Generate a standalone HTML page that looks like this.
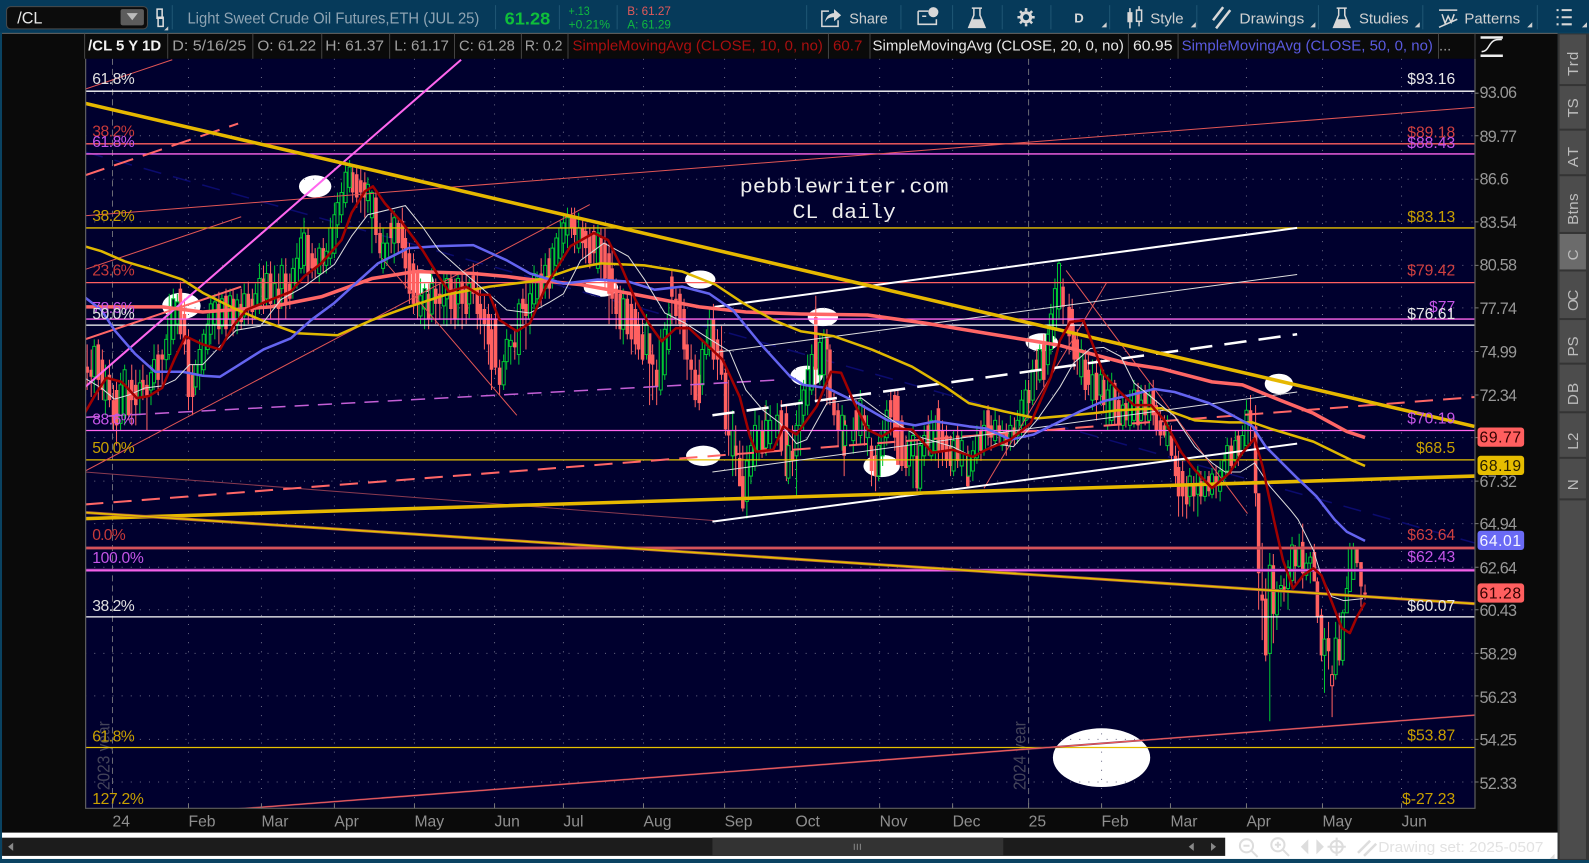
<!DOCTYPE html>
<html><head><meta charset="utf-8"><title>/CL daily</title>
<style>
html,body{margin:0;padding:0;background:#0a0a0a;overflow:hidden}
svg{display:block}
text{font-family:"Liberation Sans",sans-serif}
.m{font-size:15.500px;fill:#8f8f8f}
.p{font-size:16px;fill:#979797}
.f{font-size:15.500px}
.d{font-size:15.500px;text-anchor:end}
.i{font-size:14.500px;fill:#a0a0a0}
.t{font-size:15px;fill:#d0d0d0}
.r{font-size:15px;fill:#bdbdbd}
</style></head><body>
<svg xmlns="http://www.w3.org/2000/svg" width="1589" height="863" viewBox="0 0 1568 852" preserveAspectRatio="none">
<clipPath id="cc"><rect x="84" y="58" width="1371" height="740"/></clipPath>
<rect width="1568" height="852" fill="#0a4362"/>
<rect x="0" y="0" width="1568" height="32" fill="#063a5a"/>
<rect x="2" y="33" width="1535" height="790" fill="#0a0a0a"/>
<rect x="84" y="58" width="1371" height="740" fill="#00002e"/>
<!-- toolbar left -->
<rect x="6.500" y="6.500" width="139" height="22" rx="4" fill="#0c0c0c" stroke="#4a4a4a"/>
<text x="17" y="23" font-size="16" fill="#e8e8e8">/CL</text>
<rect x="119" y="9" width="23" height="16" rx="2" fill="#5c5c5c"/>
<path d="M125 13h11l-5.500 7z" fill="#bbb"/>
<path d="M155 9h5v9h-5zM156 17h5v9h-5z" fill="none" stroke="#ddd" stroke-width="1.500"/>
<path d="M166 30h-4l4-4z" fill="#ccc"/>
<path d="M170 5v24M489 5v24M552 5v24M609 5v24M796 5v24M889 5v24M940 5v24M989 5v24M1037 5v24M1095 5v24M1181 5v24M1301 5v24M1404 5v24M1517 5v24" stroke="#1f5674" stroke-width="1"/>
<text x="185" y="23" font-size="15.500" fill="#8fa4b3" textLength="288" lengthAdjust="spacingAndGlyphs">Light Sweet Crude Oil Futures,ETH (JUL 25)</text>
<text x="498" y="24" font-size="17.500" font-weight="700" fill="#0fbf3a" textLength="45" lengthAdjust="spacingAndGlyphs">61.28</text>
<text x="561" y="15" font-size="11.500" fill="#10b840" textLength="21" lengthAdjust="spacingAndGlyphs">+.13</text>
<text x="561" y="28" font-size="11.500" fill="#10b840" textLength="41" lengthAdjust="spacingAndGlyphs">+0.21%</text>
<text x="619" y="15" font-size="11.500" fill="#e25a5a" textLength="43" lengthAdjust="spacingAndGlyphs">B: 61.27</text>
<text x="619" y="28" font-size="11.500" fill="#10b840" textLength="43" lengthAdjust="spacingAndGlyphs">A: 61.29</text>
<!-- toolbar right icons -->
<g fill="none" stroke="#d8d8d8" stroke-width="1.500">
<path d="M818 11h-7v15h16v-6" /><path d="M814 22c1-6 5-9 9-9v-4l7 6-7 6v-4c-4 0-7 1-9 5z" fill="#d8d8d8" stroke="none"/>
<path d="M906 11h10M906 11v13h18v-5M910 16h4"/><circle cx="921" cy="12" r="5" fill="#d8d8d8" stroke="none"/>
<path d="M959 8h10M961 8v7l-5 12h16l-5-12V8"/><path d="M959 19h10l3 8h-16z" fill="#d8d8d8" stroke="none"/>
<circle cx="1012.500" cy="17" r="4.500" stroke-width="3"/><path d="M1012.500 8v3M1012.500 23v3M1004 17h3M1018 17h3M1006.500 11l2 2M1016.500 21l2 2M1018.500 11l-2 2M1008.500 21l-2 2" stroke-width="2.500"/>
<path d="M1115 8v20M1124 6v20" stroke-width="1.500"/><rect x="1112.500" y="12" width="5" height="10" fill="#d8d8d8" stroke="none"/><rect x="1121.500" y="10" width="5" height="11" fill="#063a5a"/>
<path d="M1197 20l10-13M1200 28l14-18" stroke-width="2.500"/>
<path d="M1319 8h10M1321 8v7l-5 12h16l-5-12V8"/><path d="M1319 19h10l3 8h-16z" fill="#d8d8d8" stroke="none"/>
<path d="M1420 10h18M1423 14l3 9 3-7 3 6 3-8M1420 27l18-8"/>
<path d="M1536 10h2M1536 17h2M1536 24h2M1541 10h10M1541 17h10M1541 24h10" stroke-width="2"/>
</g>
<g fill="#d0d0d0"><path d="M1092 22v5h-5zM1180 22v5h-5zM1298 22v5h-5zM1401 22v5h-5zM1512 22v5h-5zM1566 22v5h-5z"/></g>
<text x="838" y="23" class="t" textLength="38" lengthAdjust="spacingAndGlyphs">Share</text>
<text x="1060" y="22" font-size="13" font-weight="700" fill="#d8d8d8">D</text>
<text x="1135" y="23" class="t" textLength="33" lengthAdjust="spacingAndGlyphs">Style</text>
<text x="1223" y="23" class="t" textLength="64" lengthAdjust="spacingAndGlyphs">Drawings</text>
<text x="1341" y="23" class="t" textLength="49" lengthAdjust="spacingAndGlyphs">Studies</text>
<text x="1445" y="23" class="t" textLength="55" lengthAdjust="spacingAndGlyphs">Patterns</text>
<!-- info bar -->
<path d="M2 33h1535" stroke="#666" stroke-width="1"/>
<path d="M83.500 33v25M165.500 33v25M249.500 33v25M317.500 33v25M384.500 33v25M448.500 33v25M514.500 33v25M560.500 33v25M817.500 33v25M858.500 33v25M1113.500 33v25M1162.500 33v25M1419.500 33v25M1455.500 33v25" stroke="#444"/>
<text x="87" y="50" font-size="14.500" font-weight="700" fill="#f2f2f2" textLength="72" lengthAdjust="spacingAndGlyphs">/CL 5 Y 1D</text>
<text x="170" y="50" class="i" textLength="73" lengthAdjust="spacingAndGlyphs">D: 5/16/25</text>
<text x="254" y="50" class="i" textLength="58" lengthAdjust="spacingAndGlyphs">O: 61.22</text>
<text x="321" y="50" class="i" textLength="58" lengthAdjust="spacingAndGlyphs">H: 61.37</text>
<text x="389" y="50" class="i" textLength="54" lengthAdjust="spacingAndGlyphs">L: 61.17</text>
<text x="453" y="50" class="i" textLength="55" lengthAdjust="spacingAndGlyphs">C: 61.28</text>
<text x="518" y="50" class="i" textLength="37" lengthAdjust="spacingAndGlyphs">R: 0.2</text>
<text x="565" y="50" font-size="14.500" fill="#a80f0f" textLength="247" lengthAdjust="spacingAndGlyphs">SimpleMovingAvg (CLOSE, 10, 0, no)</text>
<text x="822" y="50" font-size="14.500" fill="#a80f0f" textLength="29" lengthAdjust="spacingAndGlyphs">60.7</text>
<text x="861" y="50" font-size="14.500" fill="#e8e8e8" textLength="248" lengthAdjust="spacingAndGlyphs">SimpleMovingAvg (CLOSE, 20, 0, no)</text>
<text x="1118" y="50" font-size="14.500" fill="#e8e8e8" textLength="39" lengthAdjust="spacingAndGlyphs">60.95</text>
<text x="1166" y="50" font-size="14.500" fill="#5a5ae0" textLength="248" lengthAdjust="spacingAndGlyphs">SimpleMovingAvg (CLOSE, 50, 0, no)</text>
<text x="1420" y="50" font-size="14.500" fill="#a0a0a0">...</text>
<path d="M1461 37h22M1461 55h22" stroke="#eee" stroke-width="2.500"/><path d="M1462 51c5 0 6-4 9-8 3-4 6-4 11-4" fill="none" stroke="#eee" stroke-width="1.500"/>
<!-- chart -->
<g clip-path="url(#cc)">
<g fill="#fff">
<ellipse cx="311" cy="184" rx="16" ry="11"/><ellipse cx="179" cy="302" rx="19" ry="13"/><ellipse cx="415" cy="278" rx="13" ry="12"/><ellipse cx="593" cy="284" rx="17" ry="9"/><ellipse cx="691" cy="276" rx="15" ry="9"/><ellipse cx="812" cy="313" rx="15" ry="9"/><ellipse cx="796" cy="371" rx="16" ry="10"/><ellipse cx="694" cy="450" rx="17" ry="10"/><ellipse cx="870" cy="460" rx="18" ry="11"/><ellipse cx="1028" cy="338" rx="16" ry="9"/><ellipse cx="1262" cy="379" rx="14" ry="10"/><ellipse cx="1087" cy="748" rx="48" ry="29"/>
</g>
<!-- grid -->
<g stroke="#6a6a85" stroke-width="1" stroke-dasharray="1 8">
<path d="M84 92h1371M84 134h1371M84 177h1371M84 219h1371M84 262h1371M84 304h1371M84 347h1371M84 390h1371M84 432h1371M84 475h1371M84 517h1371M84 560h1371M84 602h1371M84 645h1371M84 687h1371M84 730h1371M84 772h1371"/>
<path d="M186 58v740M258 58v740M330 58v740M409 58v740M488 58v740M556 58v740M635 58v740M715 58v740M785 58v740M868 58v740M940 58v740M1087 58v740M1155 58v740M1230 58v740M1305 58v740M1383 58v740"/>
</g>
<path d="M111 58v740M1015 58v740" stroke="#6a6a75" stroke-width="1" stroke-dasharray="6 4"/>
<text transform="translate(108 780) rotate(-90)" font-size="17" fill="#44445a" textLength="68" lengthAdjust="spacingAndGlyphs">2023 year</text>
<text transform="translate(1012 780) rotate(-90)" font-size="17" fill="#44445a" textLength="68" lengthAdjust="spacingAndGlyphs">2024 year</text>
<path d="M84 150L1455 536" stroke="#0b0b6e" stroke-width="1.500" stroke-dasharray="18 12"/>
<!-- green wicks -->
<path fill="none" stroke="#00c832" stroke-width="1" d="M93 335V388M104 360V410M119 368V425M123 360V420M138 365V410M149 360V400M152 340V385M164 330V365M167 290V355M171 285V340M175 290V330M193 355V390M197 335V385M201 325V370M205 310V350M208 292V340M212 290V335M219 290V330M227 285V320M234 290V330M241 280V322M252 280V315M256 260V310M263 258V305M271 262V305M278 255V305M289 255V295M293 240V285M297 225V270M300 215V270M315 240V280M322 240V270M326 215V262M330 200V255M333 190V235M337 180V220M341 160V205M345 158V190M363 175V210M367 188V250M378 225V270M382 230V262M389 208V260M415 275V320M419 280V325M426 265V318M438 270V320M441 270V322M452 270V322M463 275V315M497 350V385M500 325V365M504 330V360M512 295V360M523 280V330M527 262V305M530 268V305M538 250V295M545 240V285M549 230V270M553 218V262M556 210V250M560 205V245M571 210V250M590 222V270M615 285V340M638 310V355M652 325V390M656 318V375M660 298V350M693 335V390M697 325V355M700 305V352M723 405V470M737 440V512M741 425V478M745 405V465M749 410V455M756 395V450M760 400V445M767 398V440M778 430V478M786 405V490M790 380V450M793 375V425M797 350V410M801 340V390M809 330V380M813 325V385M831 400V445M834 410V450M842 412V448M849 385V438M856 410V450M867 430V475M871 415V460M875 395V440M897 425V470M901 420V482M908 430V485M912 420V460M919 405V455M923 410V455M941 425V470M949 425V470M956 445V478M960 435V475M964 420V458M971 405V450M982 405V440M989 415V445M997 410V445M1004 405V438M1008 385V430M1012 375V420M1019 355V400M1026 340V378M1034 320V370M1037 300V350M1041 275V335M1045 258V315M1067 335V380M1078 355V405M1086 360V400M1093 370V425M1097 368V420M1108 390V425M1115 385V425M1119 375V422M1126 380V425M1134 378V425M1152 410V445M1174 462V500M1182 460V510M1189 465V495M1196 462V492M1204 455V495M1208 448V478M1211 432V470M1219 425V462M1226 420V450M1230 395V445M1253 546V712M1260 574V622M1264 568V599M1271 553V602M1275 530V582M1282 527V560M1289 546V573M1293 545V576M1307 620V684M1318 614V671M1325 602V657M1329 569V605M1332 536V584M1335.500 536V572"/>
<!-- salmon wicks -->
<path fill="none" stroke="#ff6060" stroke-width="1" d="M86 340V385M90 345V392M97 335V395M101 345V395M108 355V402M112 380V425M115 375V440M127 375V415M130 360V420M134 365V420M141 360V395M145 370V425M156 340V390M160 345V380M178 278V335M182 295V350M186 325V405M190 360V410M216 288V340M223 285V335M230 285V332M238 285V325M245 278V320M249 285V320M260 262V310M267 258V315M275 270V320M282 255V315M286 270V305M304 225V280M308 240V275M311 245V275M319 235V270M348 165V200M352 165V205M356 165V210M360 170V215M371 188V240M375 220V255M386 210V250M393 215V250M397 205V255M400 225V285M404 240V300M408 250V310M412 262V315M423 280V325M430 275V320M434 280V315M445 270V320M449 275V325M456 270V325M460 270V320M467 260V300M471 268V325M474 285V330M478 290V345M482 300V360M485 310V385M489 300V370M493 355V390M508 325V355M516 285V320M519 280V345M534 255V302M542 245V295M564 205V235M567 205V250M575 215V255M578 220V260M582 225V265M586 222V262M593 225V275M597 225V285M601 240V320M604 245V310M608 275V325M612 282V335M619 288V335M623 290V350M627 295V350M630 308V355M634 315V360M641 330V400M644 340V395M648 355V400M663 265V320M667 285V320M671 285V330M675 295V355M678 320V375M682 340V390M686 350V402M690 355V405M704 300V365M708 325V375M712 322V375M716 360V430M719 375V450M726 420V470M730 435V480M733 440V505M752 415V452M755 400V448M771 395V450M776 400V475M782 420V470M805 292V395M816 325V400M819 340V400M823 388V420M827 398V440M833 410V470M845 395V440M853 400V440M860 432V480M864 440V485M879 385V430M883 385V445M886 385V459M890 410V465M894 430V470M905 435V485M916 410V450M926 395V462M930 415V460M934 420V462M938 430V470M945 420V462M955 440V482M968 415V455M975 400V440M978 410V445M986 410V440M993 418V450M1001 412V440M1015 375V408M1023 345V385M1030 330V382M1049 275V320M1055 290V350M1058 295V345M1060 320V365M1063 325V370M1071 345V395M1074 350V390M1082 355V415M1089 365V408M1100 375V420M1104 385V425M1111 390V422M1123 378V425M1130 380V420M1138 375V420M1141 395V430M1145 405V440M1149 410V432M1156 420V455M1160 440V480M1163 445V510M1167 455V510M1171 470V512M1178 470V505M1185 465V498M1193 465V490M1200 460V492M1215 432V468M1222 425V460M1234 390V440M1239 400V500M1242 500V602M1245.500 536V632M1249 571V653M1256.500 547V635M1267 571V594M1278 538V576M1285.500 517V581M1297 537V574M1300 570V615M1304 601V653M1311 614V661M1314.500 657V708M1321.500 605V657M1339 541V560M1343 555V599M1347 577V592"/>
<!-- salmon bodies -->
<path fill="none" stroke="#ff6060" stroke-width="3.500" d="M86 362V368M90 365V372M97 340V375M101 355V385M108 370V395M112 395V418M115 385V420M127 385V410M130 375V395M134 380V400M141 375V385M145 380V392M156 350V375M160 350V355M178 285V330M182 310V340M186 335V392M190 370V392M216 300V325M223 292V325M230 295V325M238 300V318M245 290V305M249 295V308M260 275V300M267 270V300M275 285V305M282 270V300M286 280V295M304 232V270M308 250V265M311 255V265M319 245V260M348 170V190M352 172V195M356 178V190M360 180V195M371 195V232M375 230V250M386 220V235M393 220V240M397 218V245M400 235V265M404 250V290M408 260V300M412 268V300M423 290V315M430 285V300M434 290V300M445 275V305M449 285V315M456 278V300M460 285V310M467 272V290M471 285V310M474 300V315M478 305V320M482 310V340M485 325V365M489 315V363M493 363V380M508 338V343M516 295V305M519 300V312M534 270V295M542 255V285M564 212V225M567 215V232M575 225V240M578 228V245M582 232V260M586 228V250M593 235V260M597 240V275M601 250V290M604 265V295M608 285V310M612 290V325M619 295V330M623 300V335M627 305V340M630 320V345M634 330V355M641 329V359M644 350V360M648 365V382M663 273V293M667 295V312M671 290V320M675 305V345M678 340V355M682 355V365M686 365V395M690 370V398M704 315V355M708 335V355M712 345V370M716 368V424M719 425V430M726 440V450M730 452V480M733 470V502M752 425V448M755 425V445M771 405V445M776 408V470M782 445V455M805 313V365M816 334V345M819 345V395M823 395V410M827 405V425M833 415V450M845 405V425M853 410V420M860 440V465M864 450V470M879 395V412M883 390V432M886 391V459M890 415V460M894 440V462M905 450V482M916 420V440M926 403V445M930 425V445M934 430V455M938 440V460M945 430V455M955 450V480M968 425V445M975 405V430M978 420V432M986 420V430M993 428V440M1001 422V430M1015 385V398M1023 355V365M1030 340V375M1049 283V303M1055 303V332M1058 305V330M1060 330V355M1063 335V355M1071 355V385M1074 365V380M1082 368V395M1089 375V400M1100 378V412M1104 395V420M1111 398V415M1123 385V420M1130 385V410M1138 385V410M1141 400V425M1145 415V430M1149 420V430M1156 430V450M1160 450V470M1163 461V490M1167 465V490M1171 480V498M1178 480V490M1185 475V490M1193 470V485M1200 470V480M1215 440V460M1222 430V450M1234 405V420M1239 421V487M1242 487V566M1245.500 587V593M1249 591V647M1256.500 558V606M1267 579V582M1278 540V559M1285.500 535V566M1297 545V574M1300 574V609M1304 607V647M1311 630V643M1321.500 631V652M1339 541V556M1343 555V579M1347 585V587"/>
<path fill="#00002e" stroke="#ff6060" stroke-width="1" d="M1313 666h3v11h-3z"/>
<!-- green bodies -->
<path fill="#00002e" stroke="#00c832" stroke-width="1" d="M91.500 342h3v30h-3zM102.500 375h3v20h-3zM117.500 380h3v38h-3zM121.500 365h3v45h-3zM136.500 378h3v14h-3zM147.500 368h3v17h-3zM150.500 355h3v23h-3zM162.500 335h3v20h-3zM165.500 310h3v40h-3zM169.500 295h3v40h-3zM173.500 298h3v22h-3zM191.500 360h3v22h-3zM195.500 345h3v25h-3zM199.500 330h3v35h-3zM203.500 320h3v25h-3zM206.500 300h3v30h-3zM210.500 298h3v22h-3zM217.500 295h3v27h-3zM225.500 292h3v23h-3zM232.500 296h3v24h-3zM239.500 290h3v22h-3zM250.500 290h3v15h-3zM254.500 275h3v27h-3zM261.500 270h3v25h-3zM269.500 280h3v15h-3zM276.500 262h3v23h-3zM287.500 265h3v20h-3zM291.500 255h3v25h-3zM295.500 235h3v30h-3zM298.500 230h3v32h-3zM313.500 245h3v25h-3zM320.500 248h3v14h-3zM324.500 225h3v30h-3zM328.500 212h3v38h-3zM331.500 200h3v22h-3zM335.500 190h3v22h-3zM339.500 170h3v30h-3zM343.500 165h3v20h-3zM361.500 182h3v16h-3zM365.500 190h3v25h-3zM376.500 240h3v25h-3zM380.500 240h3v15h-3zM387.500 215h3v25h-3zM413.500 292h3v20h-3zM417.500 285h3v20h-3zM424.500 280h3v30h-3zM436.500 280h3v22h-3zM439.500 275h3v20h-3zM450.500 275h3v25h-3zM461.500 280h3v20h-3zM495.500 357h3v23h-3zM498.500 335h3v22h-3zM502.500 336h3v6h-3zM510.500 300h3v50h-3zM521.500 290h3v25h-3zM525.500 270h3v30h-3zM528.500 275h3v20h-3zM536.500 262h3v23h-3zM543.500 245h3v30h-3zM547.500 235h3v27h-3zM551.500 225h3v30h-3zM554.500 220h3v20h-3zM558.500 215h3v17h-3zM569.500 225h3v20h-3zM588.500 230h3v35h-3zM613.500 295h3v30h-3zM636.500 320h3v30h-3zM650.500 335h3v50h-3zM654.500 325h3v45h-3zM658.500 310h3v35h-3zM691.500 345h3v35h-3zM695.500 340h3v10h-3zM698.500 315h3v30h-3zM721.500 425h3v25h-3zM735.500 455h3v40h-3zM739.500 440h3v30h-3zM743.500 420h3v40h-3zM747.500 425h3v20h-3zM754.500 415h3v27h-3zM758.500 415h3v23h-3zM765.500 410h3v22h-3zM776.500 440h3v32h-3zM784.500 420h3v30h-3zM788.500 395h3v25h-3zM791.500 385h3v25h-3zM795.500 365h3v35h-3zM799.500 350h3v35h-3zM807.500 338h3v32h-3zM811.500 330h3v40h-3zM829.500 410h3v15h-3zM832.500 420h3v20h-3zM840.500 425h3v10h-3zM847.500 395h3v35h-3zM854.500 420h3v12h-3zM865.500 440h3v30h-3zM869.500 425h3v25h-3zM873.500 405h3v27h-3zM895.500 435h3v25h-3zM899.500 430h3v20h-3zM906.500 440h3v42h-3zM910.500 430h3v20h-3zM917.500 415h3v35h-3zM921.500 425h3v20h-3zM939.500 435h3v30h-3zM947.500 435h3v25h-3zM954.500 450h3v20h-3zM958.500 445h3v20h-3zM962.500 430h3v22h-3zM969.500 420h3v25h-3zM980.500 415h3v20h-3zM987.500 425h3v15h-3zM995.500 420h3v15h-3zM1002.500 415h3v15h-3zM1006.500 395h3v25h-3zM1010.500 385h3v30h-3zM1017.500 365h3v30h-3zM1024.500 345h3v30h-3zM1032.500 330h3v30h-3zM1035.500 310h3v35h-3zM1039.500 285h3v40h-3zM1043.500 260h3v45h-3zM1065.500 345h3v27h-3zM1076.500 370h3v25h-3zM1084.500 370h3v20h-3zM1091.500 385h3v35h-3zM1095.500 380h3v35h-3zM1106.500 400h3v20h-3zM1113.500 395h3v25h-3zM1117.500 385h3v30h-3zM1124.500 395h3v20h-3zM1132.500 390h3v25h-3zM1150.500 420h3v20h-3zM1172.500 470h3v20h-3zM1180.500 465h3v23h-3zM1187.500 475h3v15h-3zM1194.500 468h3v20h-3zM1202.500 465h3v20h-3zM1206.500 455h3v17h-3zM1209.500 440h3v25h-3zM1217.500 435h3v20h-3zM1224.500 430h3v15h-3zM1228.500 405h3v35h-3zM1251.500 558h3v87h-3zM1258.500 582h3v25h-3zM1262.500 578h3v3h-3zM1269.500 560h3v21h-3zM1273.500 538h3v35h-3zM1280.500 542h3v17h-3zM1287.500 556h3v12h-3zM1291.500 550h3v6h-3zM1305.500 631h3v16h-3zM1316.500 630h3v36h-3zM1323.500 605h3v47h-3zM1327.500 581h3v24h-3zM1330.500 541h3v43h-3zM1334 541h3v31h-3z"/>
<!-- horizontals -->
<g stroke-width="1.300">
<path d="M84 90h1371M84 321h1371M84 609h1371" stroke="#fff"/>
<path d="M84 142h1371M84 279h1371" stroke="#ff5f5f"/>
<path d="M84 152h1371M84 315h1371M84 425h1371" stroke="#ff66ee"/>
<path d="M84 225h1371M84 454h1371M84 738h1371" stroke="#e6c000"/>
</g>
<path d="M84 541h1371" stroke="#a84455" stroke-width="3"/><path d="M84 541h1371" stroke="#ff6060" stroke-width="1"/>
<path d="M84 563h1371" stroke="#a040b0" stroke-width="3"/><path d="M84 563h1371" stroke="#ff66ee" stroke-width="1.300"/>
<!-- diagonals -->
<g fill="none">
<path d="M84 88L170 59M84 213L1455 106M84 266L238 214M84 465L582 202M377 255L510 410M1052 267L1231 507M971 482L1092 279" stroke="#e05555" stroke-width="1"/>
<path d="M84 466L705 514" stroke="#8a3a50" stroke-width="1"/>
<path d="M84 335L238 283" stroke="#ff6666" stroke-width="2"/>
<path d="M84 173L235 122" stroke="#ff6666" stroke-width="2" stroke-dasharray="20 10"/>
<path d="M84 412L770 375" stroke="#c45fd6" stroke-width="1.500" stroke-dasharray="14 9"/>
<path d="M84 498L1455 392" stroke="#ff6666" stroke-width="2" stroke-dasharray="18 10"/>
<path d="M230 799L1455 706" stroke="#8a3a50" stroke-width="1.800"/><path d="M230 799L1455 706" stroke="#ff6060" stroke-width=".8"/>
<path d="M84 382L455 59" stroke="#ff66ee" stroke-width="2"/>
<path d="M705 303L1280 225M703 515L1280 438" stroke="#fff" stroke-width="2"/>
<path d="M705 348L1280 271M703 466L1280 387" stroke="#ddd" stroke-width="1"/>
<path d="M703 410L1280 330" stroke="#fff" stroke-width="2.500" stroke-dasharray="22 12"/>
<path d="M84 102L1455 421M84 512L1455 470" stroke="#e6b800" stroke-width="3.500"/>
<path d="M84 506L1455 596" stroke="#b0603a" stroke-width="3"/><path d="M84 506L1455 596" stroke="#e6c000" stroke-width="1.500"/>
<polyline stroke="#ff6666" stroke-width="3.500" stroke-linejoin="round" points="83,303 160,303 200,308 267,303 317,293 367,275 410,268 467,270 500,273 523,276 573,281 623,290 690,303 736,308 790,310 856,311 913,319 973,329 1046,341 1079,350 1113,359 1146,364 1196,377 1226,380 1263,395 1296,408 1329,426 1347,432"/>
<polyline stroke="#e0b800" stroke-width="2.500" stroke-linejoin="round" points="83,243 100,248 123,258 150,266 180,276 200,289 230,304 260,317 293,329 333,331 367,316 400,304 440,291 483,283 523,278 543,273 566,265 593,260 636,262 673,268 706,281 733,299 763,316 790,327 823,332 860,345 900,362 933,382 956,398 990,406 1023,413 1046,411 1079,408 1103,405 1146,403 1179,415 1213,417 1236,417 1253,423 1296,436 1333,454 1347,460"/>
<polyline stroke="#6464f0" stroke-width="2.500" stroke-linejoin="round" points="83,293 100,306 113,326 133,349 153,367 180,367 200,371 217,372 233,362 260,345 287,334 307,316 330,299 353,278 373,260 403,245 433,243 467,242 500,257 523,270 556,280 590,276 620,278 646,286 673,283 700,290 723,306 750,339 780,372 793,380 816,383 843,396 876,415 903,420 923,416 956,421 973,423 997,434 1020,429 1046,416 1066,406 1089,396 1116,390 1139,384 1159,387 1193,398 1216,410 1236,421 1249,441 1279,471 1299,490 1317,513 1329,525 1347,534"/>
<polyline stroke="#dcdcdc" stroke-width="1" points="83,373 100,383 113,394 127,390 143,383 160,381 173,375 187,360 200,360 217,342 233,326 257,322 277,296 300,283 330,261 347,233 363,212 400,203 417,224 433,247 460,271 483,291 500,306 523,309 543,298 556,290 573,257 596,240 620,253 636,276 656,309 676,319 696,332 720,347 736,385 753,405 770,418 786,438 796,434 816,398 850,393 870,408 890,421 906,431 940,441 960,451 983,438 1000,441 1023,415 1046,382 1059,359 1076,344 1089,343 1106,352 1119,378 1136,392 1159,411 1179,441 1196,457 1209,466 1224,466 1238,457 1253,480 1273,503 1281,513 1296,543 1304,569 1314,589 1326,593 1345,591"/>
<polyline stroke="#a00000" stroke-width="2.500" stroke-linejoin="round" points="83,409 95,388 105,373 120,377 135,393 147,391 160,383 172,355 183,332 200,340 217,345 230,322 243,306 267,296 287,288 300,273 317,260 337,237 347,210 360,189 368,184 380,201 397,220 417,247 433,273 443,288 460,283 473,291 483,291 493,316 510,327 523,319 540,280 563,243 586,230 600,237 613,263 627,296 640,319 653,337 667,324 680,324 696,339 713,355 730,392 740,431 746,446 763,444 773,421 786,429 806,401 820,367 830,368 843,398 856,424 870,431 883,423 900,424 920,447 940,444 960,451 973,444 997,434 1017,418 1037,372 1046,336 1056,318 1069,316 1079,342 1089,369 1103,385 1119,400 1136,400 1149,415 1166,447 1179,464 1196,482 1213,467 1226,447 1238,433 1246,461 1257,513 1266,553 1276,581 1286,568 1296,561 1304,568 1316,599 1324,620 1332,625 1339,609 1347,595"/>
</g>
<text x="730" y="190" style="font-family:'Liberation Mono',monospace" font-size="20" fill="#eee" textLength="206" lengthAdjust="spacingAndGlyphs">pebblewriter.com</text>
<text x="782" y="215" style="font-family:'Liberation Mono',monospace" font-size="20" fill="#eee" textLength="102" lengthAdjust="spacingAndGlyphs">CL daily</text>
</g>
<!-- fib labels -->
<text x="91" y="83" class="f" fill="#e0e0e0" textLength="42">61.8%</text>
<text x="91" y="135" class="f" fill="#c83a3a" textLength="42">38.2%</text>
<text x="91" y="145" class="f" fill="#c555e8" textLength="42">61.8%</text>
<text x="91" y="218" class="f" fill="#c8a000" textLength="42">38.2%</text>
<text x="91" y="272" class="f" fill="#c83a3a" textLength="42">23.6%</text>
<text x="91" y="309" class="f" fill="#c555e8" textLength="42">78.6%</text>
<text x="91" y="315" class="f" fill="#e0e0e0" textLength="42">50.0%</text>
<text x="91" y="419" class="f" fill="#c555e8" textLength="42">88.6%</text>
<text x="91" y="447" class="f" fill="#c8a000" textLength="42">50.0%</text>
<text x="91" y="533" class="f" fill="#c83a3a" textLength="33">0.0%</text>
<text x="91" y="556" class="f" fill="#c555e8" textLength="51">100.0%</text>
<text x="91" y="603" class="f" fill="#e0e0e0" textLength="42">38.2%</text>
<text x="91" y="732" class="f" fill="#c8a000" textLength="42">61.8%</text>
<text x="91" y="794" class="f" fill="#c8a000" textLength="51">127.2%</text>
<text x="1436" y="83" class="d" fill="#e8e8e8">$93.16</text>
<text x="1436" y="136" class="d" fill="#d04040">$89.18</text>
<text x="1436" y="146" class="d" fill="#c555e8">$88.43</text>
<text x="1436" y="219" class="d" fill="#c8a000">$83.13</text>
<text x="1436" y="272" class="d" fill="#d04040">$79.42</text>
<text x="1436" y="308" class="d" fill="#c555e8">$77</text>
<text x="1436" y="315" class="d" fill="#e8e8e8">$76.61</text>
<text x="1436" y="418" class="d" fill="#c555e8">$70.19</text>
<text x="1436" y="447" class="d" fill="#c8a000">$68.5</text>
<text x="1436" y="533" class="d" fill="#d04040">$63.64</text>
<text x="1436" y="555" class="d" fill="#c555e8">$62.43</text>
<text x="1436" y="603" class="d" fill="#e8e8e8">$60.07</text>
<text x="1436" y="731" class="d" fill="#c8a000">$53.87</text>
<text x="1436" y="794" class="d" fill="#c8a000">$-27.23</text>
<!-- axes -->
<path d="M84.500 58V798H1455.500V58" fill="none" stroke="#5e5e5e" stroke-width="1.200"/>
<path d="M1455 92h4M1455 134h4M1455 177h4M1455 219h4M1455 262h4M1455 304h4M1455 347h4M1455 390h4M1455 432h4M1455 475h4M1455 517h4M1455 560h4M1455 602h4M1455 645h4M1455 687h4M1455 730h4M1455 772h4" stroke="#777"/>
<path d="M111 798v-5M186 798v-5M258 798v-5M330 798v-5M409 798v-5M488 798v-5M556 798v-5M635 798v-5M715 798v-5M785 798v-5M868 798v-5M940 798v-5M1015 798v-5M1087 798v-5M1155 798v-5M1230 798v-5M1305 798v-5M1383 798v-5" stroke="#777"/>
<!-- price labels -->
<text x="1460" y="97" class="p" textLength="37">93.06</text>
<text x="1460" y="140" class="p" textLength="37">89.77</text>
<text x="1460" y="182" class="p" textLength="29">86.6</text>
<text x="1460" y="225" class="p" textLength="37">83.54</text>
<text x="1460" y="267" class="p" textLength="37">80.58</text>
<text x="1460" y="310" class="p" textLength="37">77.74</text>
<text x="1460" y="353" class="p" textLength="37">74.99</text>
<text x="1460" y="396" class="p" textLength="37">72.34</text>
<text x="1460" y="481" class="p" textLength="37">67.32</text>
<text x="1460" y="523" class="p" textLength="37">64.94</text>
<text x="1460" y="566" class="p" textLength="37">62.64</text>
<text x="1460" y="608" class="p" textLength="37">60.43</text>
<text x="1460" y="651" class="p" textLength="37">58.29</text>
<text x="1460" y="694" class="p" textLength="37">56.23</text>
<text x="1460" y="736" class="p" textLength="37">54.25</text>
<text x="1460" y="779" class="p" textLength="37">52.33</text>
<!-- badges -->
<rect x="1458" y="422" width="46" height="19" rx="3" fill="#ff5f5f"/><text x="1460" y="437" font-size="15.500" fill="#300" textLength="41">69.77</text>
<rect x="1458" y="450" width="46" height="19" rx="3" fill="#e6bd00"/><text x="1460" y="465" font-size="15.500" fill="#2a2000" textLength="41">68.19</text>
<rect x="1458" y="524" width="46" height="19" rx="3" fill="#6a6af5"/><text x="1460" y="539" font-size="15.500" fill="#f4f4ff" textLength="41">64.01</text>
<rect x="1458" y="576" width="46" height="19" rx="3" fill="#ff5f5f"/><text x="1460" y="591" font-size="15.500" fill="#300" textLength="41">61.28</text>
<!-- months -->
<text x="111" y="816" class="m">24</text><text x="186" y="816" class="m">Feb</text><text x="258" y="816" class="m">Mar</text><text x="330" y="816" class="m">Apr</text><text x="409" y="816" class="m">May</text><text x="488" y="816" class="m">Jun</text><text x="556" y="816" class="m">Jul</text><text x="635" y="816" class="m">Aug</text><text x="715" y="816" class="m">Sep</text><text x="785" y="816" class="m">Oct</text><text x="868" y="816" class="m">Nov</text><text x="940" y="816" class="m">Dec</text><text x="1015" y="816" class="m">25</text><text x="1087" y="816" class="m">Feb</text><text x="1155" y="816" class="m">Mar</text><text x="1230" y="816" class="m">Apr</text><text x="1305" y="816" class="m">May</text><text x="1383" y="816" class="m">Jun</text>
<!-- bottom -->
<rect x="2" y="822" width="1535" height="26" fill="#fff"/>
<rect x="2" y="827" width="1207" height="18" fill="#1c1c1c"/>
<rect x="703" y="827" width="287" height="18" fill="#333"/>
<path d="M843 833v6M846 833v6M849 833v6" stroke="#888"/>
<path d="M13 832v8l-5-4zM1178 832v8l-5-4zM1195 832v8l5-4z" fill="#888"/>
<g fill="none" stroke="#ddd" stroke-width="2">
<circle cx="1230" cy="835" r="6.500"/><path d="M1235 840l6 6M1227 835h6"/>
<circle cx="1261" cy="834" r="6.500"/><path d="M1266 839l6 6M1258 834h6M1261 831v6"/>
<path d="M1285 836l5-5v10zM1305 836l-5-5v10z" fill="#ddd"/>
<circle cx="1319" cy="836" r="6"/><path d="M1310 836h18M1319 827v18"/>
<path d="M1340 842l12-12M1346 845l12-12" stroke-width="2.500"/>
</g>
<text x="1360" y="841" font-size="15" fill="#e2e2e2" textLength="163" lengthAdjust="spacingAndGlyphs">Drawing set: 2025-0507</text>
<path d="M1534 843v5h-5z" fill="#ddd"/>
<!-- right rail -->
<rect x="1537" y="33" width="31" height="816" fill="#343434"/>
<g fill="#4c4c4c">
<rect x="1539" y="34" width="26" height="49"/><rect x="1539" y="85" width="26" height="42"/><rect x="1539" y="129" width="26" height="43"/><rect x="1539" y="174" width="26" height="55"/><rect x="1539" y="231" width="26" height="35" fill="#6b6b6b"/><rect x="1539" y="268" width="26" height="46"/><rect x="1539" y="316" width="26" height="42"/><rect x="1539" y="360" width="26" height="46"/><rect x="1539" y="408" width="26" height="43"/><rect x="1539" y="453" width="26" height="39"/><rect x="1539" y="494" width="26" height="354"/>
</g>
<text transform="translate(1557 75) rotate(-90)" class="r" textLength="24">Trd</text>
<text transform="translate(1557 116) rotate(-90)" class="r" textLength="19">TS</text>
<text transform="translate(1557 165) rotate(-90)" class="r" textLength="20">AT</text>
<text transform="translate(1557 222) rotate(-90)" class="r" textLength="31">Btns</text>
<text transform="translate(1557 257) rotate(-90)" class="r" textLength="11">C</text>
<text transform="translate(1557 307) rotate(-90)" class="r" textLength="21">OC</text>
<text transform="translate(1557 352) rotate(-90)" class="r" textLength="20">PS</text>
<text transform="translate(1557 400) rotate(-90)" class="r" textLength="22">DB</text>
<text transform="translate(1557 444) rotate(-90)" class="r" textLength="17">L2</text>
<text transform="translate(1557 484) rotate(-90)" class="r" textLength="11">N</text>
</svg>
</body></html>
